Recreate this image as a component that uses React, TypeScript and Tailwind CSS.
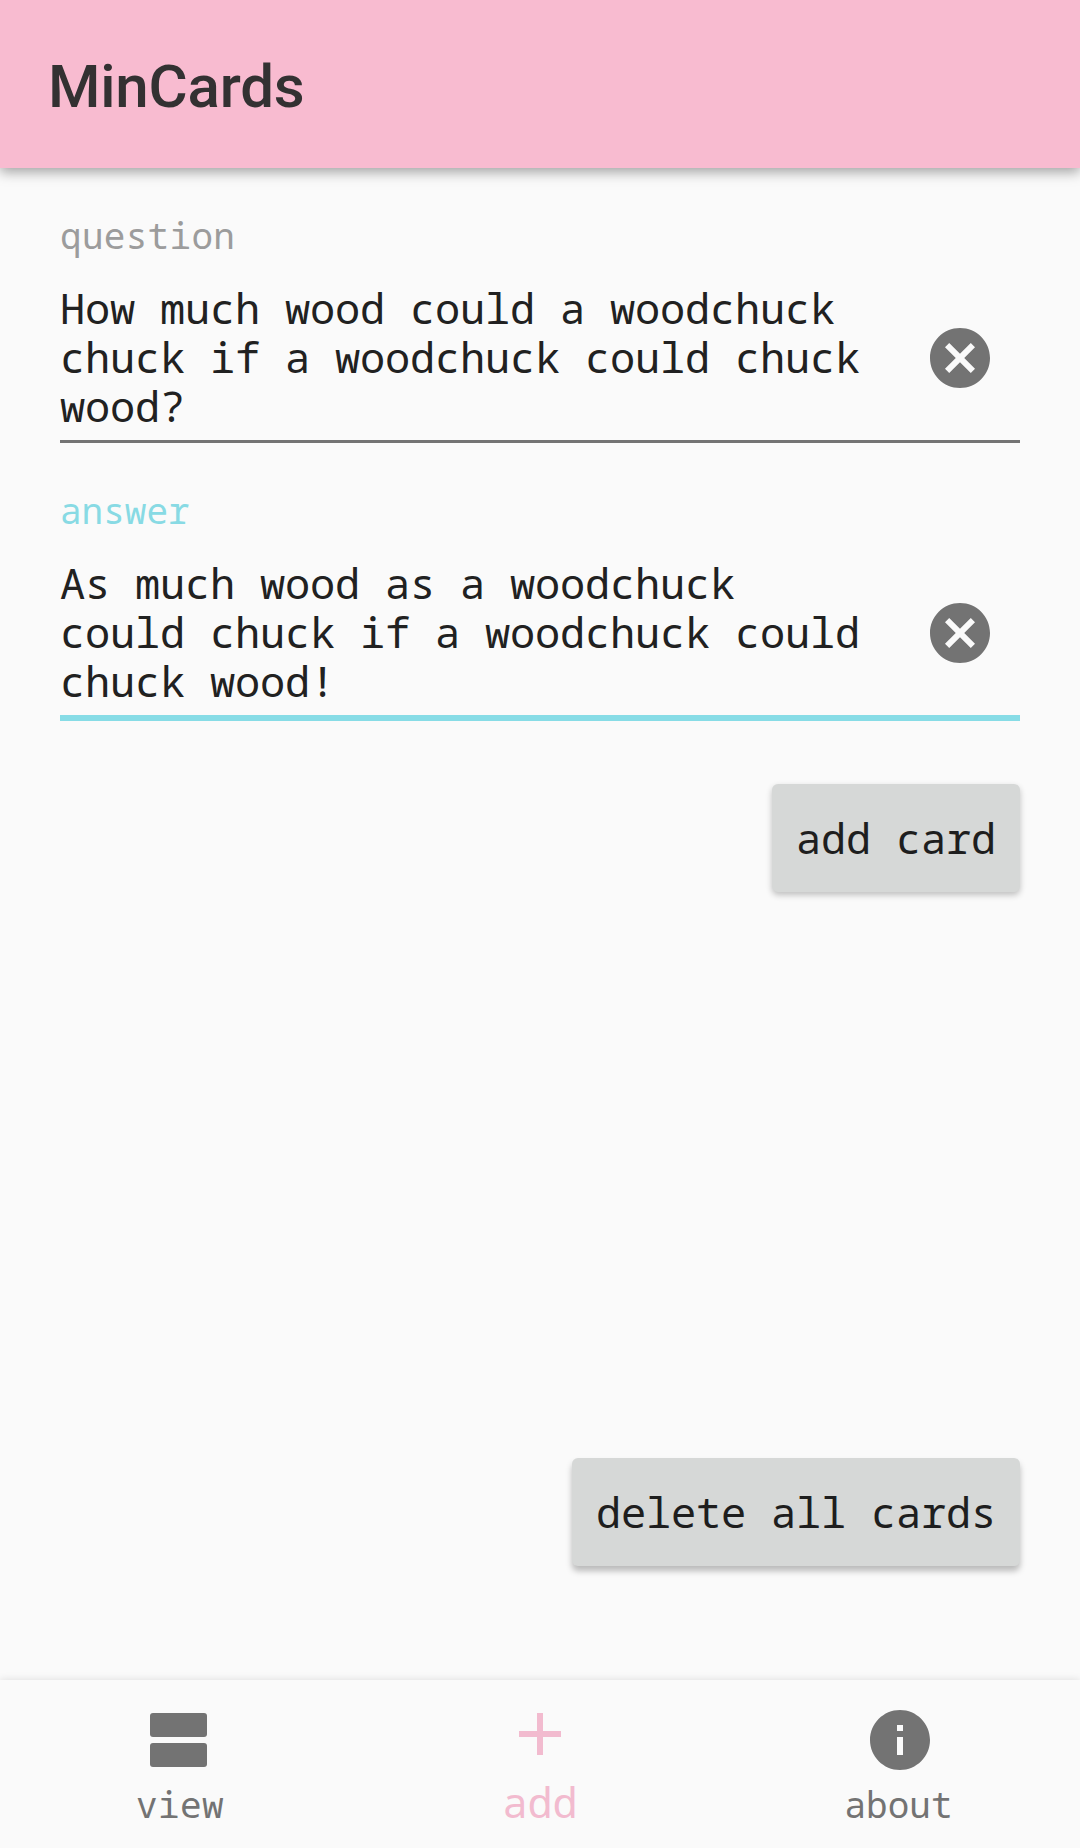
import type { ReactNode } from 'react';

type FieldProps = {
  label: string;
  lines: string[];
  active?: boolean;
};

function Field({ label, lines, active = false }: FieldProps) {
  return (
    <section>
      <label
        className={`block text-[36px] leading-[42px] ${
          active ? 'text-[#88dae4]' : 'tracking-[0.3px] text-[#9c9c9c]'
        }`}
      >
        {label}
      </label>
      <div
        className={`mt-[26px] flex justify-between pb-[10px] ${
          active ? 'border-b-[6px] border-[#87dce6]' : 'border-b-[3px] border-[#747474]'
        }`}
      >
        <div className="text-[42px] leading-[49px] tracking-[-0.2px] whitespace-pre text-[#212121]">
          {lines.map((line) => (
            <p key={line}>{line}</p>
          ))}
        </div>
        <button className="mt-[39px] mr-6 size-[72px]" aria-label={`Clear ${label}`}>
          <svg viewBox="0 0 24 24" className="size-full fill-[#737373]">
            <path d="M12 2C6.47 2 2 6.47 2 12s4.47 10 10 10 10-4.47 10-10S17.53 2 12 2zm5 13.59L15.59 17 12 13.41 8.41 17 7 15.59 10.59 12 7 8.41 8.41 7 12 10.59 15.59 7 17 8.41 13.41 12 17 15.59z" />
          </svg>
        </button>
      </div>
    </section>
  );
}

function Button({ children, className }: { children: ReactNode; className: string }) {
  return (
    <button
      className={`h-[108px] rounded-[6px] bg-[#d6d8d7] px-6 pb-px text-[42px] leading-[49px] tracking-[-0.2px] whitespace-pre text-[#1e1e1e] ${className}`}
    >
      {children}
    </button>
  );
}

function Tab({ icon, children, className }: { icon: ReactNode; children: ReactNode; className: string }) {
  return (
    <a className={`flex flex-1 flex-col items-center pt-6 ${className}`}>
      <svg viewBox="0 0 24 24" className="size-[72px] fill-current">
        {icon}
      </svg>
      {children}
    </a>
  );
}

export default function App() {
  return (
    <div className="flex h-[1848px] w-[1080px] flex-col overflow-hidden bg-[#fafafa] font-['Noto_Sans_Mono','DejaVu_Sans_Mono',monospace]">
      <header className="flex h-[168px] shrink-0 items-center bg-[#f8bbd0] px-12 pt-[5px] shadow-[0_4px_12px_rgba(0,0,0,0.36)]">
        <h1 className="font-['Roboto',sans-serif] text-[60px] leading-[70px] font-medium tracking-[-0.2px] text-[#333132]">
          MinCards
        </h1>
      </header>

      <main className="flex flex-1 flex-col px-[60px] pt-[47px] pb-[114px]">
        <Field
          label="question"
          lines={['How much wood could a woodchuck', 'chuck if a woodchuck could chuck', 'wood?']}
        />
        <div className="mt-[47px]">
          <Field
            active
            label="answer"
            lines={['As much wood as a woodchuck', 'could chuck if a woodchuck could', 'chuck wood!']}
          />
        </div>
        <Button className="mt-[63px] w-[248px] self-end shadow-[0_3px_6px_rgba(0,0,0,0.24)]">add card</Button>
        <Button className="mt-auto w-[448px] self-end shadow-[0_5px_6px_rgba(0,0,0,0.26)]">delete all cards</Button>
      </main>

      <nav className="flex h-[168px] shrink-0 bg-[#fafafa] shadow-[0_0_8px_rgba(0,0,0,0.12)]">
        <Tab
          className="text-[#737373]"
          icon={
            <>
              <rect x="2" y="3" width="19" height="8" rx="1" />
              <rect x="2" y="13" width="19" height="8" rx="1" />
            </>
          }
        >
          <span className="mt-[8px] text-[36px] leading-[42px] tracking-[0.4px]">view</span>
        </Tab>
        <Tab
          className="text-[#f2bbcf]"
          icon={<path d="M19 11h-6v6h-2v-6H5V9h6V3h2v6h6z" />}
        >
          <span className="mt-px text-[42px] leading-[49px] tracking-[-0.2px]">add</span>
        </Tab>
        <Tab
          className="text-[#737373]"
          icon={
            <path d="M12 2C6.48 2 2 6.48 2 12s4.48 10 10 10 10-4.48 10-10S17.52 2 12 2zm1 15h-2v-6h2v6zm0-8h-2V7h2v2z" />
          }
        >
          <span className="mt-[8px] pr-[3px] text-[36px] leading-[42px]">about</span>
        </Tab>
      </nav>
    </div>
  );
}
